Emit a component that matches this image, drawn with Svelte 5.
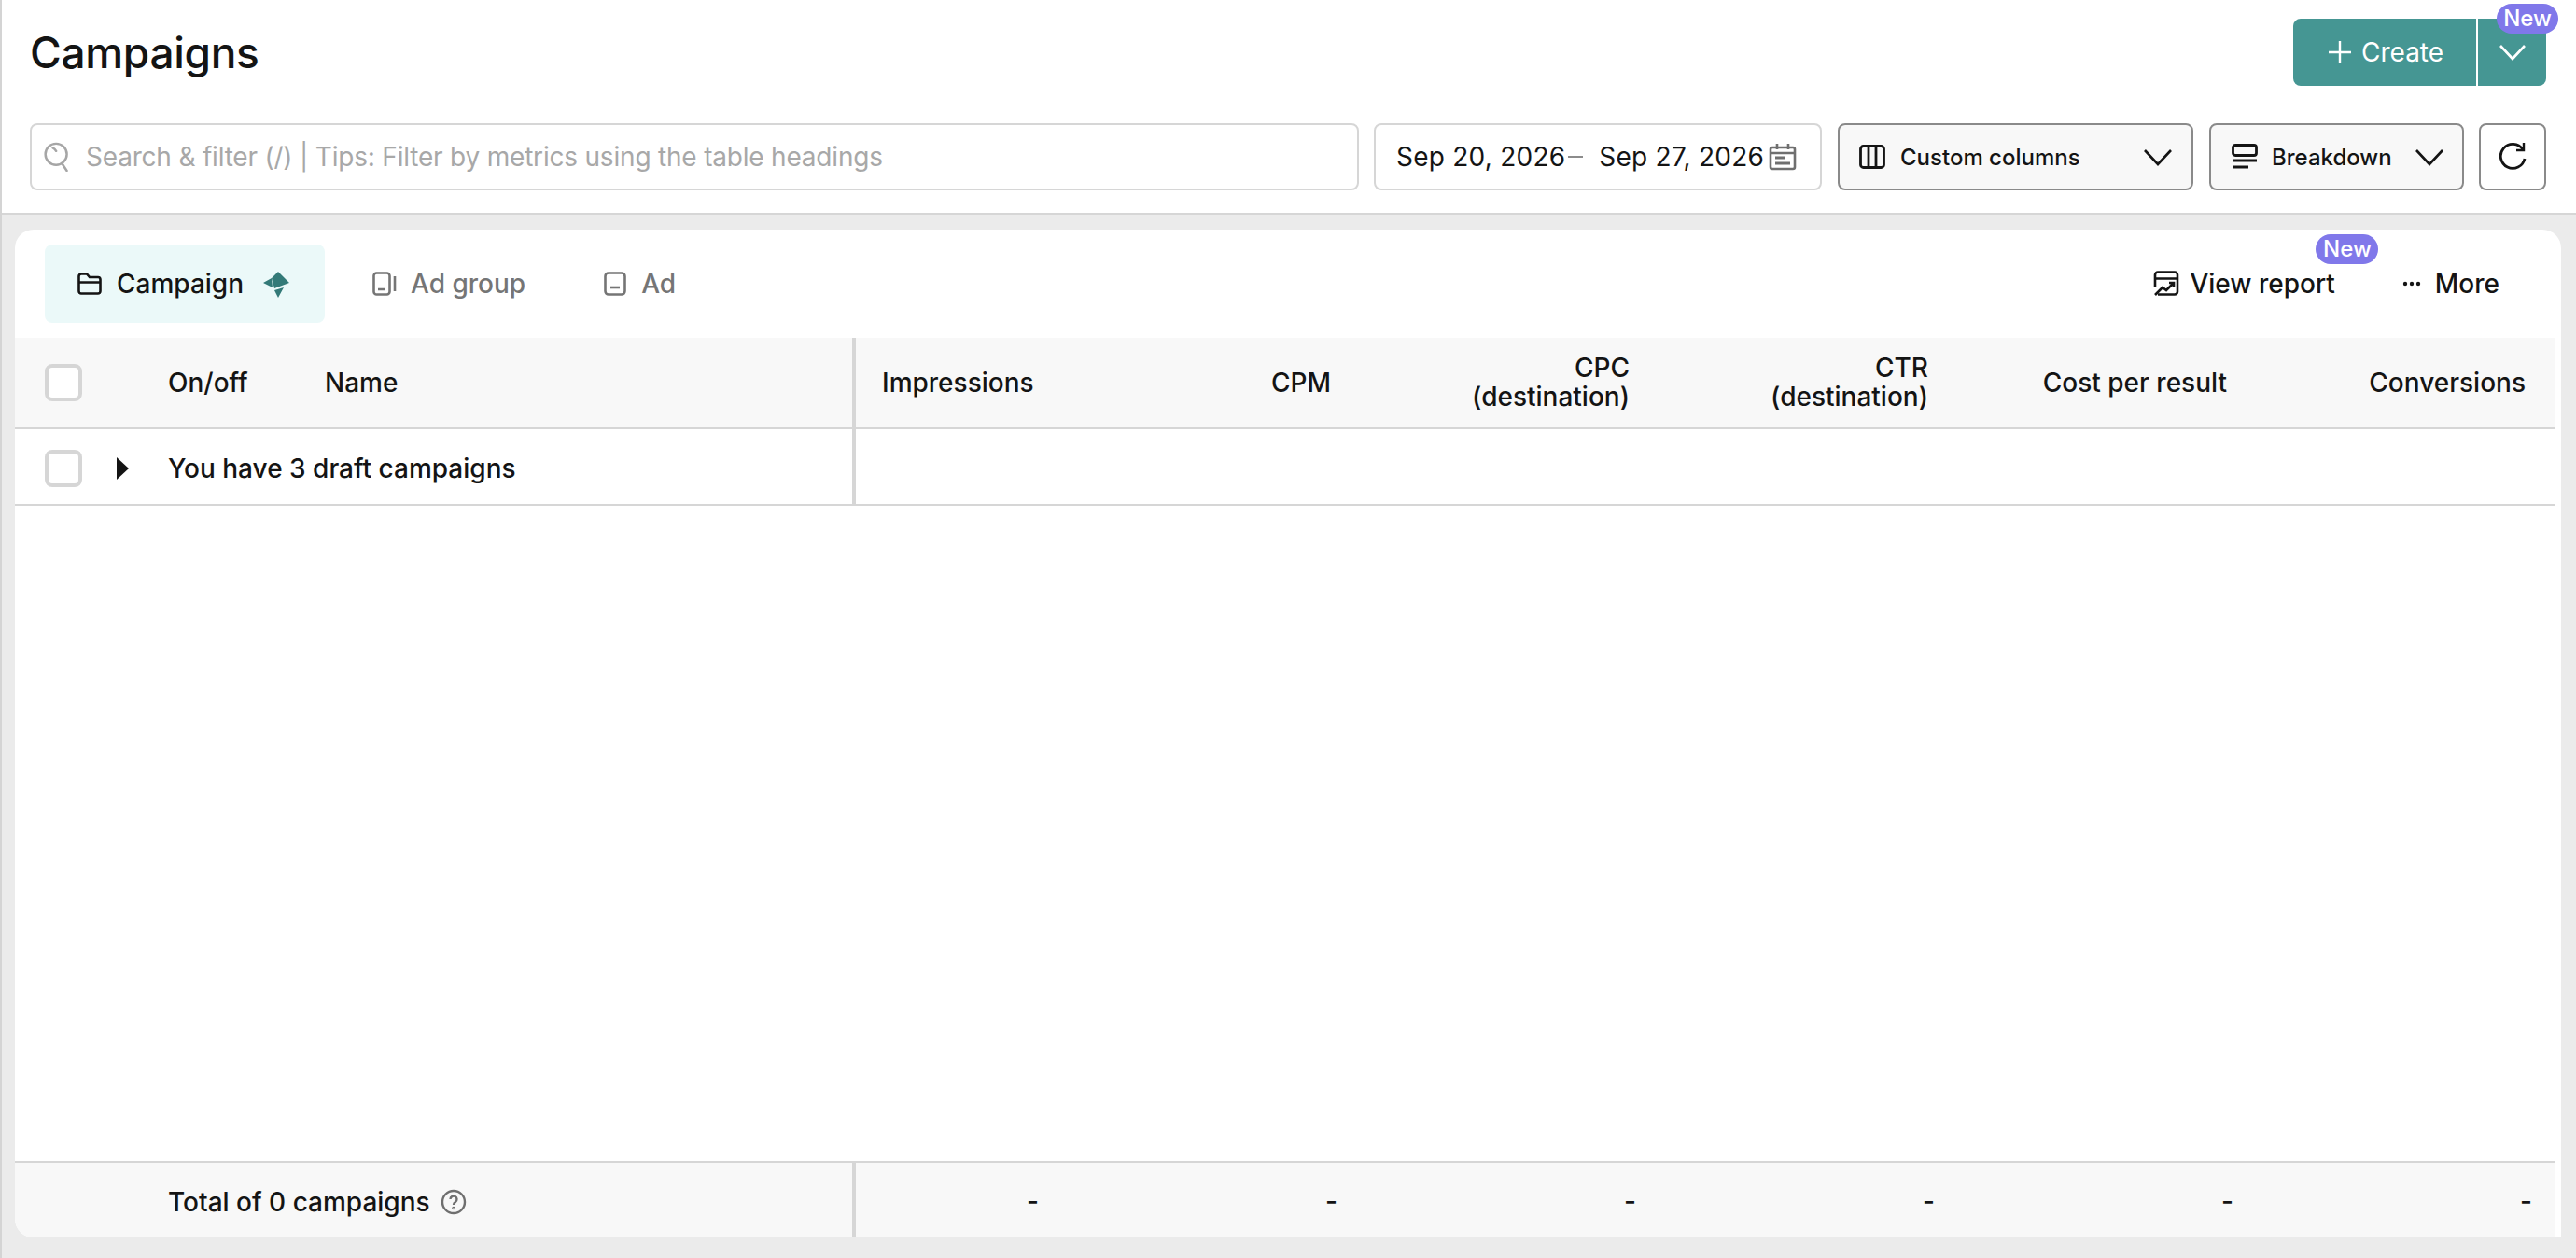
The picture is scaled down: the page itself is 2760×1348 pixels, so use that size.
<script lang="ts">
  const metrics = [
    { key: 'impressions', label: ['Impressions'], left: true },
    { key: 'cpm', label: ['CPM'] },
    { key: 'cpc', label: ['CPC', '(destination)'] },
    { key: 'ctr', label: ['CTR', '(destination)'] },
    { key: 'cost', label: ['Cost per result'] },
    { key: 'conv', label: ['Conversions'] }
  ];
</script>

<div class="page">
  <header class="top">
    <div class="title-row">
      <h1>Campaigns</h1>
      <div class="create">
        <button class="create-main">
          <svg width="28" height="28" viewBox="0 0 28 28" fill="none" stroke="#fff" stroke-width="2.4"><path d="M14 2v24M2 14h24" /></svg>
          Create
        </button>
        <button class="create-more" aria-label="More create options">
          <svg class="chev" width="30" height="30" viewBox="0 0 30 30" fill="none" stroke="#fff" stroke-width="2.6"><path d="M2 8l13 14L28 8" /></svg>
        </button>
        <span class="badge create-badge">New</span>
      </div>
    </div>
    <div class="filters">
      <label class="search">
        <svg width="30" height="32" viewBox="0 0 34 36" fill="none" stroke="#a6a6a6" stroke-width="2.8" stroke-linecap="round">
          <circle cx="16" cy="15" r="13" />
          <path d="M23 26l6 9M12 7c2 1 3 2 4 4" />
        </svg>
        <input placeholder="Search & filter (/) | Tips: Filter by metrics using the table headings" />
      </label>
      <div class="dates">
        <span>Sep 20, 2026</span>
        <span class="dash"></span>
        <span>Sep 27, 2026</span>
        <svg width="30" height="30" viewBox="0 0 30 30" fill="none" stroke="#6f6f6f" stroke-width="2.6">
          <rect x="2" y="5" width="26" height="23" rx="2" />
          <path d="M2 11h26M9 1v6M21 1v6" />
          <path d="M7 16h11M7 22h16" stroke-width="3" />
        </svg>
      </div>
      <button class="tool columns">
        <svg width="28" height="28" viewBox="0 0 28 28" fill="none" stroke="#141414" stroke-width="2.8">
          <rect x="1.5" y="2.5" width="25" height="23" rx="3" />
          <path d="M10 3v22M18 3v22" />
        </svg>
        <span>Custom columns</span>
        <svg class="chev" width="30" height="30" viewBox="0 0 30 30" fill="none" stroke="#141414" stroke-width="2.6"><path d="M1 8l14 15L29 8" /></svg>
      </button>
      <button class="tool breakdown">
        <svg width="28" height="28" viewBox="0 0 28 28" fill="none" stroke="#141414" stroke-width="2.8">
          <rect x="1.5" y="1.5" width="25" height="11" rx="2.5" />
          <path d="M1 18h26M1 25h17" />
        </svg>
        <span>Breakdown</span>
        <svg class="chev" width="30" height="30" viewBox="0 0 30 30" fill="none" stroke="#141414" stroke-width="2.6"><path d="M1 8l14 15L29 8" /></svg>
      </button>
      <button class="tool refresh" aria-label="Refresh">
        <svg width="30" height="32" viewBox="0 0 30 32" fill="none" stroke="#141414" stroke-width="2.8">
          <path d="M26 8a13 13 0 1 0 2 10" />
          <path d="M27 1v8h-8" stroke-width="2.4" />
        </svg>
      </button>
    </div>
  </header>

  <main class="card">
    <nav class="tabs">
      <button class="tab active">
        <svg width="26" height="26" viewBox="0 0 26 26" fill="none" stroke="#141414" stroke-width="2.6">
          <path d="M1.5 21V5a2.5 2.5 0 0 1 2.5-2.5h6l3 3.5h9a2.5 2.5 0 0 1 2.5 2.500V21a2.5 2.5 0 0 1-2.5 2.5H4A2.5 2.5 0 0 1 1.5 21zM1.5 11.5h23" />
        </svg>
        <span>Campaign</span>
        <svg class="spark" width="28" height="29" viewBox="0 0 28 29" fill="#337a78">
          <path d="M16 1l12 12-16 6-3-11zM0 13l9-5 1 10zM12 21l10-3-6 11z" />
        </svg>
      </button>
      <button class="tab group">
        <svg width="26" height="26" viewBox="0 0 26 26" fill="none" stroke="#757575" stroke-width="2.6">
          <rect x="1.500" y="1.500" width="17" height="23" rx="3" />
          <path d="M6 19h7M24 5v16" />
        </svg>
        <span>Ad group</span>
      </button>
      <button class="tab ad">
        <svg width="24" height="26" viewBox="0 0 24 26" fill="none" stroke="#757575" stroke-width="2.6">
          <rect x="1.500" y="1.500" width="21" height="23" rx="3.500" />
          <path d="M7 17h10" />
        </svg>
        <span>Ad</span>
      </button>
      <div class="tab-actions">
        <button class="action report">
          <svg width="28" height="28" viewBox="0 0 28 28" fill="none" stroke="#141414" stroke-width="2.600">
            <path d="M5 25.500H23a3 3 0 0 0 3-3V4.500a3 3 0 0 0-3-3H5a3 3 0 0 0-3 3V17M2 8.500h24" />
            <path d="M2 26l8-8 4 3 8-8M17 13h5v4" />
          </svg>
          <span>View report</span>
          <span class="badge report-badge">New</span>
        </button>
        <button class="action more">
          <svg width="20" height="6" viewBox="0 0 20 6" fill="#141414"><circle cx="3" cy="3" r="2.200" /><circle cx="10" cy="3" r="2.200" /><circle cx="17" cy="3" r="2.200" /></svg>
          <span>More</span>
        </button>
      </div>
    </nav>

    <div class="table">
      <div class="row head">
        <div class="fixed">
          <span class="check"></span>
          <span class="onoff">On/off</span>
          <span>Name</span>
        </div>
        {#each metrics as m}
          <div class="cell" class:left={m.left}>
            {#each m.label as line}<span>{line}</span>{/each}
          </div>
        {/each}
      </div>
      <div class="row draft">
        <div class="fixed">
          <span class="check"></span>
          <svg class="caret" width="14" height="24" viewBox="0 0 14 24" fill="#141414"><path d="M0 0l13 12L0 24z" /></svg>
          <span>You have 3 draft campaigns</span>
        </div>
      </div>
      <div class="row filler">
        <div class="blank"></div>
      </div>
      <div class="row total">
        <div class="fixed">
          <span>Total of 0 campaigns</span>
          <svg width="28" height="28" viewBox="0 0 28 28" fill="none" stroke="#6f6f6f" stroke-width="2.400">
            <circle cx="14" cy="14" r="12" />
            <path d="M10.500 11a3.500 3.500 0 1 1 5.500 3c-1.500 1-2 1.500-2 3" />
            <circle cx="14" cy="20.500" r="0.600" />
          </svg>
        </div>
        {#each metrics as m}
          <div class="cell">-</div>
        {/each}
      </div>
    </div>
  </main>
</div>

<style>
  :global(body) {
    margin: 0;
    background: #ebebeb;
  }
  .page {
    box-sizing: border-box;
    height: 1348px;
    display: flex;
    flex-direction: column;
    border-left: 2px solid #d4d4d4;
    font-family: Inter, "Liberation Sans", sans-serif;
    font-size: 28px;
    color: #141414;
    overflow: hidden;
  }
  button {
    font: inherit;
    color: inherit;
    background: none;
    border: 0;
    padding: 0;
    display: flex;
    align-items: center;
  }

  .top {
    height: 230px;
    flex: none;
    box-sizing: border-box;
    background: #fff;
    border-bottom: 2px solid #d6d6d6;
    padding: 20px 32px 0 30px;
  }
  .title-row {
    height: 72px;
    display: flex;
    justify-content: space-between;
    align-items: center;
  }
  h1 {
    margin: 0;
    font-size: 46px;
    font-weight: 500;
    letter-spacing: -0.3px;
  }
  .create {
    position: relative;
    display: flex;
    height: 72px;
    color: #fff;
    background: #459693;
    border-radius: 8px;
  }
  .create-main {
    width: 198px;
    gap: 9px;
    padding-left: 36px;
    box-sizing: border-box;
    border-right: 2px solid #fff;
  }
  .create-more {
    width: 73px;
    justify-content: center;
  }
  .badge {
    position: absolute;
    height: 32px;
    border-radius: 16px;
    background: #8078ea;
    color: #fff;
    font-size: 24px;
    font-weight: 500;
    line-height: 32px;
    text-align: center;
  }
  .create-badge {
    top: -16px;
    left: 218px;
    width: 66px;
  }

  .filters {
    margin-top: 40px;
    display: flex;
    gap: 16px;
    height: 72px;
  }
  .search {
    box-sizing: border-box;
    width: 1424px;
    display: flex;
    align-items: center;
    gap: 16px;
    padding-left: 12px;
    background: #fff;
    border: 2px solid #d6d6d6;
    border-radius: 8px;
  }
  .search input {
    flex: 1;
    border: 0;
    outline: 0;
    padding: 0;
    font: inherit;
    letter-spacing: -0.2px;
    background: none;
  }
  .search input::placeholder {
    color: #a8a8a8;
    opacity: 1;
  }
  .dates {
    box-sizing: border-box;
    width: 480px;
    display: flex;
    align-items: center;
    padding-left: 22px;
    letter-spacing: 0.24px;
    border: 2px solid #d6d6d6;
    border-radius: 8px;
  }
  .dash {
    width: 16px;
    height: 2px;
    background: #8c8c8c;
    margin: 0 17px 0 3px;
  }
  .dates svg {
    margin-left: 5px;
  }
  .tool {
    box-sizing: border-box;
    background: #f8f8f8;
    border: 2px solid #8a8a8a;
    border-radius: 8px;
    font-size: 24px;
    font-weight: 500;
  }
  .columns {
    width: 381px;
    margin-left: 1px;
    padding: 0 21px 0 21px;
    gap: 16px;
  }
  .breakdown {
    width: 273px;
    margin-left: 1px;
    padding: 0 20px 0 22px;
    gap: 15px;
  }
  .tool span {
    flex: 1;
    text-align: left;
  }
  .refresh {
    width: 72px;
    justify-content: center;
    background: #fff;
  }

  .card {
    flex: 1;
    margin: 16px 16px 22px 14px;
    background: #fff;
    border-radius: 20px 20px 0 20px;
    display: flex;
    flex-direction: column;
    overflow: hidden;
    min-height: 0;
  }
  .tabs {
    height: 116px;
    flex: none;
    box-sizing: border-box;
    padding: 16px 32px 16px 32px;
    display: flex;
    align-items: stretch;
    font-weight: 500;
  }
  .tab {
    gap: 16px;
    color: #757575;
    border-radius: 8px;
  }
  .tab.active {
    width: 300px;
    box-sizing: border-box;
    padding-left: 35px;
    color: #141414;
    background: #ebf9f9;
    margin-right: 51px;
  }
  .tab.group {
    gap: 15px;
    margin-right: 84px;
  }
  .spark {
    margin-left: 5px;
  }
  .tab-actions {
    margin-left: auto;
    display: flex;
    align-items: center;
    gap: 72px;
    padding-right: 34px;
  }
  .action {
    position: relative;
    gap: 11px;
  }
  .more {
    gap: 15px;
  }
  .report-badge {
    top: -36px;
    left: 174px;
    width: 67px;
  }

  .table {
    flex: 1;
    width: 2722px;
    display: flex;
    flex-direction: column;
    min-height: 0;
    font-weight: 500;
  }
  .row {
    box-sizing: border-box;
    flex: none;
    display: grid;
    grid-template-columns: 901px 221px repeat(5, 320px);
    border-bottom: 2px solid #d6d6d6;
  }
  .fixed {
    display: flex;
    align-items: center;
    padding-left: 32px;
    border-right: 4px solid #d6d6d6;
    min-width: 0;
  }
  .cell {
    display: flex;
    flex-direction: column;
    justify-content: center;
    align-items: flex-end;
    padding-right: 32px;
    line-height: 31px;
  }
  .cell.left {
    align-items: flex-start;
    padding-left: 28px;
  }
  .head {
    height: 98px;
    background: #f8f8f8;
  }
  .check {
    box-sizing: border-box;
    width: 40px;
    height: 40px;
    flex: none;
    background: #fff;
    border: 4px solid #d6d6d6;
    border-radius: 8px;
  }
  .head .check {
    margin-right: 92px;
  }
  .onoff {
    width: 168px;
  }
  .draft {
    height: 82px;
  }
  .draft .fixed {
    padding-top: 4px;
  }
  .caret {
    margin: 0 41px 0 37px;
  }
  .filler {
    flex: 1;
  }
  .total {
    height: 80px;
    background: #f8f8f8;
    border-bottom: 0;
  }
  .total .fixed {
    padding: 3px 0 0 164px;
    gap: 11px;
  }
  .total .cell {
    padding: 3px 25px 0 0;
  }
</style>
